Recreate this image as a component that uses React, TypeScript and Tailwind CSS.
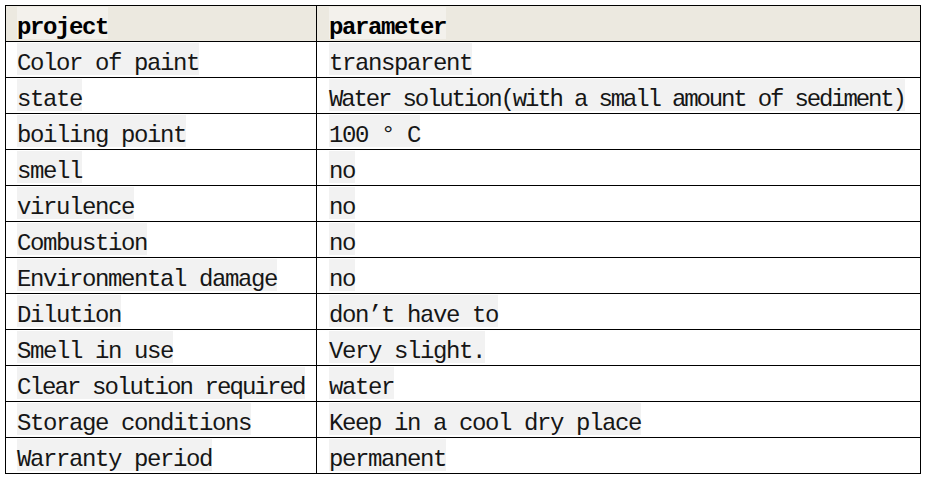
const rows: [string, string][] = [
  ["Color of paint", "transparent"],
  ["state", "Water solution(with a small amount of sediment)"],
  ["boiling point", "100 ° C"],
  ["smell", "no"],
  ["virulence", "no"],
  ["Combustion", "no"],
  ["Environmental damage", "no"],
  ["Dilution", "don’t have to"],
  ["Smell in use", "Very slight."],
  ["Clear solution required", "water"],
  ["Storage conditions", "Keep in a cool dry place"],
  ["Warranty period", "permanent"],
];

const squeezed: Record<string, string> = {
  "Water solution(with a small amount of sediment)": "tracking-[-2.15px]",
  "Clear solution required": "tracking-[-1.9px]",
};

function Mark({ text, header = false }: { text: string; header?: boolean }) {
  return (
    <span
      className={
        "block w-fit h-[32px] pt-[5px] leading-[32px] whitespace-pre " +
        (header ? "bg-[#f3f1ec] font-bold text-black " : "bg-[#f2f2f2] text-[#161616] ") +
        (squeezed[text] ?? "tracking-[-1.4px]")
      }
    >
      {text}
    </span>
  );
}

export default function App() {
  return (
    <div className="w-[926px] h-[477px] bg-white pt-[5px] pl-[5px] font-['Liberation_Mono',monospace] text-[24px]">
      <table className="w-[916px] table-fixed border-collapse">
        <colgroup>
          <col className="w-[311px]" />
          <col />
        </colgroup>
        <thead>
          <tr className="h-[36px] bg-[#ece9e0]">
            <th className="border border-black p-0 pt-[1px] pl-[11px] text-left align-top font-bold">
              <Mark text="project" header />
            </th>
            <th className="border border-black p-0 pt-[1px] pl-[12px] text-left align-top font-bold">
              <Mark text="parameter" header />
            </th>
          </tr>
        </thead>
        <tbody>
          {rows.map(([a, b]) => (
            <tr key={a} className="h-[36px]">
              <td className="border border-black p-0 pt-[1px] pl-[11px] align-top">
                <Mark text={a} />
              </td>
              <td className="border border-black p-0 pt-[1px] pl-[12px] align-top">
                <Mark text={b} />
              </td>
            </tr>
          ))}
        </tbody>
      </table>
    </div>
  );
}
